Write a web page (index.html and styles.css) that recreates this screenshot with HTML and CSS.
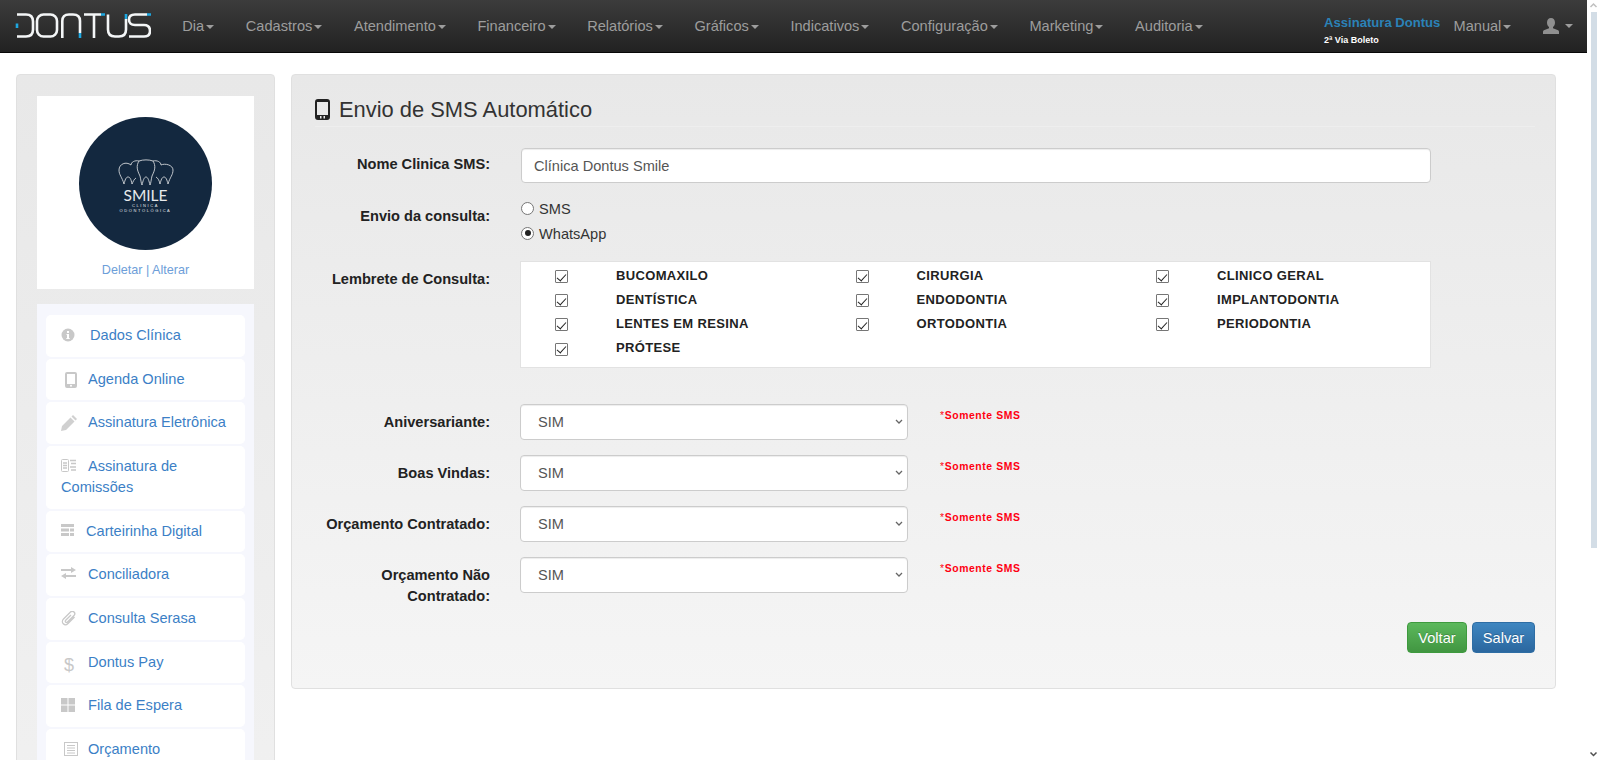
FILE: index.html
```html
<!DOCTYPE html>
<html lang="pt-BR">
<head>
<meta charset="utf-8">
<title>Envio de SMS Automático</title>
<link rel="stylesheet" href="styles.css">
</head>
<body>
<div class="app">
  <div class="page">
    <nav class="navbar">
      <a class="brand" href="#">
        <svg width="136" height="26" viewBox="0 0 136 26" fill="none" stroke="#f4f6f7" stroke-width="2.6">
          <path d="M2 1.500H11Q18 1.500 18 8.500V16.500Q18 23.500 11 23.500H2"/>
          <rect x="22" y="1.500" width="20" height="22" rx="6.500"/>
          <path d="M47.300 25V8Q47.300 1.500 54 1.500H58Q65 1.500 65 8V20"/>
          <path d="M69 1.500H86M79 1.500V25"/>
          <path d="M93 1.500V16.500Q93 23.500 100 23.500H104Q111 23.500 111 16.500V6"/>
          <path d="M132 1.500H120Q114 1.500 114 6.500Q114 12 120 12H129Q135 12 135 18Q135 23.500 129 23.500H114"/>
          <path d="M2 10.500V15M65 20V25M86 1.500H90M111 1V6M132 1.500H136" stroke="#1ea7e0"/>
        </svg>
      </a>
      <ul class="menu">
        <li class="menu-item">Dia<b class="caret"></b></li>
        <li class="menu-item">Cadastros<b class="caret"></b></li>
        <li class="menu-item">Atendimento<b class="caret"></b></li>
        <li class="menu-item">Financeiro<b class="caret"></b></li>
        <li class="menu-item">Relatórios<b class="caret"></b></li>
        <li class="menu-item">Gráficos<b class="caret"></b></li>
        <li class="menu-item">Indicativos<b class="caret"></b></li>
        <li class="menu-item">Configuração<b class="caret"></b></li>
        <li class="menu-item">Marketing<b class="caret"></b></li>
        <li class="menu-item">Auditoria<b class="caret"></b></li>
      </ul>
      <div class="nav-right">
        <div class="sign">
          <a class="sign-title" href="#">Assinatura Dontus</a>
          <a class="sign-sub" href="#">2ª Via Boleto</a>
        </div>
        <div class="menu-item manual">Manual<b class="caret"></b></div>
        <div class="menu-item user">
          <svg width="16" height="16" viewBox="0 0 16 16" fill="#8f8f8f"><path d="M8 0c2.500 0 4 2 4 4.500 0 2-.8 3.600-2 4.500v1.300l4.500 1.800c1 .4 1.500 1 1.500 1.900v2H0v-2c0-.9.500-1.500 1.500-1.900L6 10.300V9C4.800 8.100 4 6.500 4 4.500 4 2 5.500 0 8 0z"/></svg>
          <b class="caret caret-user"></b>
        </div>
      </div>
    </nav>

    <div class="content">
      <aside class="side">
        <div class="logo-box">
          <div class="logo-circle">
            <svg width="56" height="29" viewBox="0 0 56 29" fill="none" stroke="#d3d6d9" stroke-width=".9">
              <path d="M13 6C8 2 1 5 1 11c0 5 3 7 5 14 1-4 2-7 4-7s3 2 4 7c1-2 2-5 4-6"/>
              <path d="M13 6c0-3 4-5 8-4 4-1.500 10-1.500 14 0 4-1 8 1 8 4"/>
              <path d="M21 2c-3 5-2 9 1 15 1 4 1 7 2 9 1-4 2-8 4-8s3 4 4 8c1-2 1-5 2-9 3-6 4-10 1-15"/>
              <path d="M43 6c4-2 12 0 12 5 0 5-3 7-5 14-1-4-2-7-4-7s-3 3-4 7c-.5-3-2-6-4-7"/>
            </svg>
            <span class="logo-smile">SMILE</span>
            <span class="logo-sub">CLÍNICA</span>
            <span class="logo-sub">ODONTOLÓGICA</span>
          </div>
          <div class="logo-links"><a href="#">Deletar</a> | <a href="#">Alterar</a></div>
        </div>
        <ul class="side-menu">
          <li class="side-item">
            <span class="ic ic-wide"><svg width="14" height="14" viewBox="0 0 14 14"><circle cx="7" cy="7" r="6.500" fill="#c8c8c8"/><path d="M6 3h2v2H6zM5.500 6H8v4h.7v1H5.300v-1H6V7h-.5z" fill="#fff"/></svg></span><a class="side-link" href="#">Dados Clínica</a>
          </li>
          <li class="side-item">
            <span class="ic ic-in"><svg width="14" height="16" viewBox="0 0 14 16"><path d="M3 0h8a2 2 0 0 1 2 2v12a2 2 0 0 1-2 2H3a2 2 0 0 1-2-2V2a2 2 0 0 1 2-2zm0 2v10h8V2zm4 10.800a1 1 0 1 0 0 2 1 1 0 0 0 0-2z" fill="#c8c8c8" fill-rule="evenodd"/></svg></span><a class="side-link" href="#">Agenda Online</a>
          </li>
          <li class="side-item">
            <span class="ic"><svg width="16" height="16" viewBox="0 0 16 16"><path d="M12 0l4 4-1.500 1.500-4-4zM9.500 2.500l4 4L5 15 0 16l1-5z" fill="#d0d0d0"/></svg></span><a class="side-link" href="#">Assinatura Eletrônica</a>
          </li>
          <li class="side-item">
            <span class="ic"><svg width="15" height="13" viewBox="0 0 15 13" fill="none" stroke="#c8c8c8"><rect x=".5" y=".5" width="7" height="12" rx="1"/><path d="M2 4h4M2 6.500h4M2 9h4M9 1.500h6M10 4.500h5M9 8h6M10 11h5" stroke-width="1.500"/></svg></span><a class="side-link" href="#">Assinatura de Comissões</a>
          </li>
          <li class="side-item">
            <span class="ic ic-narrow"><svg width="13" height="12" viewBox="0 0 13 12" fill="#c8c8c8"><path d="M0 0h13v3H0zM0 4.500h8v3H0zM9 4.500h4v3H9zM0 9h8v3H0zM9 9h4v3H9z"/></svg></span><a class="side-link" href="#">Carteirinha Digital</a>
          </li>
          <li class="side-item">
            <span class="ic"><svg width="15" height="12" viewBox="0 0 15 12" fill="#c8c8c8"><path d="M0 2h10V0l5 3-5 3V4H0zM15 8H5V6L0 9l5 3v-2h10z"/></svg></span><a class="side-link" href="#">Conciliadora</a>
          </li>
          <li class="side-item">
            <span class="ic"><svg width="16" height="16" viewBox="0 0 16 16" fill="none" stroke="#c8c8c8" stroke-width="1.300"><path d="M13.500 6L7 12.500c-1.500 1.500-3.500 1.500-4.700.3S1 9.500 2.500 8l7-7c1-1 2.500-1 3.500 0s1 2.500 0 3.500L6.500 11c-.6.600-1.400.6-1.900.1s-.5-1.300.1-1.900L10 4"/></svg></span><a class="side-link" href="#">Consulta Serasa</a>
          </li>
          <li class="side-item">
            <span class="ic ic-in dollar">$</span><a class="side-link" href="#">Dontus Pay</a>
          </li>
          <li class="side-item">
            <span class="ic"><svg width="14" height="14" viewBox="0 0 14 14" fill="#c8c8c8"><path d="M0 0h6.500v6.500H0zM7.500 0H14v6.500H7.500zM0 7.500h6.500V14H0zM7.500 7.500H14V14H7.500z"/></svg></span><a class="side-link" href="#">Fila de Espera</a>
          </li>
          <li class="side-item">
            <span class="ic ic-in"><svg width="14" height="14" viewBox="0 0 14 14" fill="none" stroke="#c8c8c8"><rect x=".5" y=".5" width="13" height="13"/><path d="M3 3.500h8M3 6h8M3 8.500h8M3 11h8"/></svg></span><a class="side-link" href="#">Orçamento</a>
          </li>
        </ul>
      </aside>

      <main class="well">
        <h3 class="title">
          <svg width="15" height="21" viewBox="0 0 15 21"><path d="M3 0h9a3 3 0 0 1 3 3v15a3 3 0 0 1-3 3H3a3 3 0 0 1-3-3V3a3 3 0 0 1 3-3zm-1 3v13h11V3zm3 14v2.500h1.500V17zm3.500 0v2.500H10V17z" fill="#222" fill-rule="evenodd"/></svg>
          Envio de SMS Automático
        </h3>
        <form class="form">
          <div class="row row-name">
            <label class="lbl">Nome Clinica SMS:</label>
            <input class="field wide" type="text" value="Clínica Dontus Smile">
          </div>
          <div class="row row-radio">
            <label class="lbl">Envio da consulta:</label>
            <div class="radios">
              <label class="radio"><input type="radio" name="envio">SMS</label>
              <label class="radio"><input type="radio" name="envio" checked>WhatsApp</label>
            </div>
          </div>
          <div class="row row-check">
            <label class="lbl">Lembrete de Consulta:</label>
            <div class="checks">
              <label class="check"><input type="checkbox" checked><span>BUCOMAXILO</span></label>
              <label class="check"><input type="checkbox" checked><span>CIRURGIA</span></label>
              <label class="check"><input type="checkbox" checked><span>CLINICO GERAL</span></label>
              <label class="check"><input type="checkbox" checked><span>DENTÍSTICA</span></label>
              <label class="check"><input type="checkbox" checked><span>ENDODONTIA</span></label>
              <label class="check"><input type="checkbox" checked><span>IMPLANTODONTIA</span></label>
              <label class="check"><input type="checkbox" checked><span>LENTES EM RESINA</span></label>
              <label class="check"><input type="checkbox" checked><span>ORTODONTIA</span></label>
              <label class="check"><input type="checkbox" checked><span>PERIODONTIA</span></label>
              <label class="check"><input type="checkbox" checked><span>PRÓTESE</span></label>
            </div>
          </div>
          <div class="row row-sel">
            <label class="lbl">Aniversariante:</label>
            <select class="field sel"><option>SIM</option></select>
            <span class="only"><span class="star">*</span>Somente SMS</span>
          </div>
          <div class="row row-sel">
            <label class="lbl">Boas Vindas:</label>
            <select class="field sel"><option>SIM</option></select>
            <span class="only"><span class="star">*</span>Somente SMS</span>
          </div>
          <div class="row row-sel">
            <label class="lbl">Orçamento Contratado:</label>
            <select class="field sel"><option>SIM</option></select>
            <span class="only"><span class="star">*</span>Somente SMS</span>
          </div>
          <div class="row row-sel">
            <label class="lbl">Orçamento Não Contratado:</label>
            <select class="field sel"><option>SIM</option></select>
            <span class="only"><span class="star">*</span>Somente SMS</span>
          </div>
          <div class="actions">
            <button class="btn btn-green" type="button">Voltar</button>
            <button class="btn btn-blue" type="button">Salvar</button>
          </div>
        </form>
      </main>
    </div>
  </div>
  <div class="scrollbar">
    <svg width="13" height="12" viewBox="0 0 13 12"><path d="M3.500 7L6.500 4l3 3" fill="none" stroke="#c0c0c0" stroke-width="1.500"/></svg>
    <div class="thumb"></div>
    <div class="track"></div>
    <svg width="13" height="12" viewBox="0 0 13 12"><path d="M3.500 4.500l3 3 3-3" fill="none" stroke="#505050" stroke-width="1.500"/></svg>
  </div>
</div>
</body>
</html>
```
FILE: styles.css
```css
* { box-sizing: border-box; }
html, body { margin: 0; height: 760px; overflow: hidden; background: #fff; }
body { font-family: "Liberation Sans", Arial, sans-serif; font-size: 14.6px; line-height: 21px; color: #333; }
a { color: #337ab7; text-decoration: none; }
.app { display: flex; width: 1600px; height: 760px; }
.page { width: 1587px; height: 760px; overflow: hidden; }

.scrollbar { width: 13px; display: flex; flex-direction: column; align-items: flex-start; background: #fff; }
.scrollbar svg { flex: none; }
.thumb { flex: none; width: 6px; height: 536px; margin-left: 4px; background: #d3dde6; }
.track { flex: 1; }

.navbar { display: flex; align-items: center; height: 53px; padding-left: 15px; background: linear-gradient(#3c3c3c, #222); border-bottom: 1px solid #080808; }
.brand { display: block; width: 136px; height: 26px; margin-right: 15.500px; flex: none; }
.menu { display: flex; list-style: none; margin: 0; padding: 0; }
.menu-item { display: block; padding: 0 15.800px; color: #9d9d9d; white-space: nowrap; }
.caret { display: inline-block; width: 0; height: 0; margin-left: 2px; vertical-align: middle; border-top: 4px solid; border-right: 4px solid transparent; border-left: 4px solid transparent; }
.nav-right { display: flex; align-items: center; margin-left: auto; }
.sign { display: flex; flex-direction: column; width: 117.500px; margin-top: 10px; }
.sign-title { font-weight: 700; font-size: 13.100px; line-height: 18px; color: #2b82b8; white-space: nowrap; }
.sign-sub { font-weight: 700; font-size: 9px; line-height: 17px; color: #fff; white-space: nowrap; }
.manual { padding: 0 0 0 12px; width: 101px; }
.user { display: flex; align-items: center; padding: 0 14.500px 0 0; }
.caret-user { margin-left: 6px; }

.content { display: flex; align-items: flex-start; gap: 16px; padding: 21px 31px 0 16px; }
.side { flex: none; width: 259px; height: 760px; padding: 21px 20px; background: linear-gradient(#e8e8e8, #f1f1f1); border: 1px solid #e0e0e0; border-radius: 4px; }
.logo-box { display: flex; flex-direction: column; align-items: center; height: 193px; padding-top: 21px; background: #fff; }
.logo-circle { display: flex; flex-direction: column; align-items: center; flex: none; width: 133px; height: 133px; padding-top: 42px; border-radius: 50%; background: #13283f; color: #e8eaec; }
.logo-circle svg { flex: none; }
.logo-smile { font-size: 15.500px; line-height: 15px; margin-top: 0; font-family: "Lato", sans-serif; }
.logo-sub { font-size: 4px; line-height: 5px; letter-spacing: 1.600px; }
.logo-links { margin-top: 11px; font-size: 12.600px; line-height: 18px; color: #6d9ed9; }
.logo-links a { color: #6d9ed9; }

.side-menu { list-style: none; margin: 15px 0 0; padding: 11px 9px; background: #f6f7fd; }
.side-item { padding: 10px 15px; margin-bottom: 2px; background: #fff; border-radius: 5px; line-height: 21.500px; min-height: 41.600px; }
.ic { display: inline-block; width: 27px; height: 16px; line-height: 16px; vertical-align: -4px; }
.ic svg { display: block; }
.ic-wide { width: 29px; }
.ic-narrow { width: 25px; }
.ic-in { padding-left: 3px; }
.dollar { font-size: 18px; color: #c8c8c8; }
.side-link { color: #3c7fc6; }

.well { flex: none; width: 1265px; height: 615px; padding: 9px 20px 0 23px; border: 1px solid #e0e0e0; border-radius: 4px; background: linear-gradient(#e8e8e8, #f5f5f5); }
.title { display: flex; align-items: center; gap: 9px; margin: 0; height: 43px; padding-top: 8px; font-size: 21.900px; font-weight: 400; color: #333; border-bottom: 1px solid #eee; }
.form { display: block; }
.row { display: flex; align-items: flex-start; }
.lbl { width: 175px; flex: none; text-align: right; font-weight: 700; line-height: 21px; color: #222; }
.row-name { margin-top: 21px; }
.row-name .lbl { padding-top: 6px; }
.field { height: 35px; border: 1px solid #ccc; border-radius: 4px; background: #fff; color: #555; font: 14.600px "Liberation Sans", Arial, sans-serif; padding: 6px 12px; box-shadow: inset 0 1px 1px rgba(0,0,0,.075); }
.wide { width: 910px; margin-left: 31px; }
.row-radio { margin-top: 13px; height: 65px; }
.row-radio .lbl { padding-top: 10px; }
.radios { margin-left: 31px; display: flex; flex-direction: column; padding-top: 1px; }
.radio { display: flex; align-items: center; height: 25px; gap: 5px; color: #333; }
.radio input { appearance: none; position: relative; margin: 0 0 3px 0; width: 13px; height: 13px; border: 1px solid #767676; border-radius: 50%; background: #fff; }
.radio input:checked::after { content: ""; position: absolute; left: 2.500px; top: 2.500px; width: 6px; height: 6px; border-radius: 50%; background: #222; }
.row-check .lbl { padding-top: 8px; }
.row-check { margin-bottom: 36px; }
.checks { width: 911px; height: 107px; margin-left: 30px; display: grid; grid-template-columns: repeat(3, 300.500px); grid-auto-rows: 24.200px; padding-top: 3.500px; background: #fff; border: 1px solid #e2e2e2; }
.check { display: flex; align-items: flex-start; font-size: 13px; font-weight: 700; letter-spacing: .35px; color: #222; }
.check input { appearance: none; position: relative; width: 13px; height: 13px; margin: 4.500px 0 0 34px; flex: none; border: 1px solid #767676; border-radius: 1px; background: #fff; }
.check input:checked::after { content: ""; position: absolute; left: 3px; top: .5px; width: 4px; height: 8px; border: solid #222; border-width: 0 1.300px 1.300px 0; transform: rotate(42deg); }
.check span { margin-left: 48px; line-height: 20px; }
.row-sel { height: 51px; }
.row-sel .lbl { padding-top: 8px; }
.sel { appearance: none; width: 388px; height: 36px; margin-left: 30px; padding-left: 17px; background: #fff url("data:image/svg+xml;utf8,<svg xmlns='http://www.w3.org/2000/svg' width='8' height='6'><path d='M1 1l3 3 3-3' fill='none' stroke='%23666' stroke-width='1.300'/></svg>") no-repeat right 4px center; }
.only { margin: 2px 0 0 32px; font-size: 10.400px; font-weight: 700; letter-spacing: .6px; color: #f01; line-height: 20px; }
.star { font-weight: 400; }
.actions { display: flex; justify-content: flex-end; gap: 5px; margin-top: 14px; }
.btn { height: 31px; padding: 0; font: 14.600px "Liberation Sans", Arial, sans-serif; color: #fff; border-radius: 4px; border: 1px solid; text-shadow: 0 -1px 0 rgba(0,0,0,.2); }
.btn-green { width: 60px; background: linear-gradient(#5cb85c, #419641); border-color: #3e9a3e; }
.btn-blue { width: 63px; background: linear-gradient(#3f86c0, #2b679f); border-color: #2e6da4; }
```
